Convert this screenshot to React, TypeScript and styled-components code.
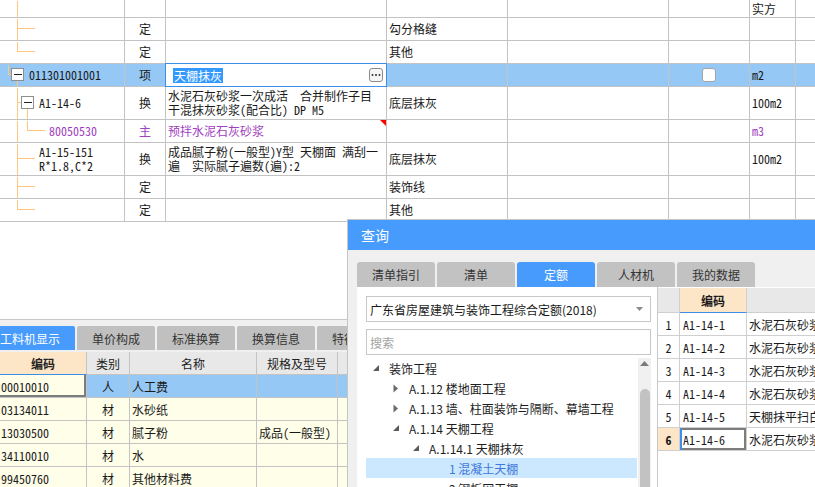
import React from 'react';
import styled, { createGlobalStyle } from 'styled-components';

const LINE = '#c3c3c3';
const SEL = '#96c8f5';
const BLUE = '#469bfd';
const PURPLE = '#a040c0';
const ORANGE = '#ffc77a';
const MONO = `"Noto Sans Mono CJK SC", "Noto Sans CJK SC", "Liberation Mono", monospace`;
const UI = `"Noto Sans CJK SC", "Noto Sans", sans-serif`;

const GlobalStyle = createGlobalStyle`
  html, body { margin: 0; padding: 0; background: #fff; }
  body { font-family: ${UI}; font-size: 12px; color: #1a1a1a; }
  * { box-sizing: border-box; }
`;

const Screen = styled.div`
  position: relative;
  width: 815px;
  height: 487px;
  overflow: hidden;
  background: #fff;
  display: flex;
  flex-direction: column;
  font-family: ${MONO};
`;

/* ---------- top grid ---------- */
const TopGrid = styled.div`
  display: flex;
  flex-direction: column;
  flex: none;
`;

const TopRow = styled.div<{ $h: number; $sel?: boolean }>`
  display: grid;
  grid-template-columns: 125px 41px 221px 121px 161px 81px 46px 20px;
  height: ${(p) => p.$h}px;
  background: ${(p) => (p.$sel ? SEL : '#fff')};
`;

const Cell = styled.div<{ $center?: boolean; $color?: string; $pl?: number }>`
  position: relative;
  border-right: 1px solid ${LINE};
  border-bottom: 1px solid ${LINE};
  display: flex;
  align-items: center;
  justify-content: ${(p) => (p.$center ? 'center' : 'flex-start')};
  padding-left: ${(p) => p.$pl ?? 0}px;
  color: ${(p) => p.$color ?? '#1a1a1a'};
  font-size: 12px;
  line-height: 14px;
  white-space: nowrap;
  overflow: hidden;
`;

const FlagCell = styled(Cell)`
  &::before {
    content: '';
    position: absolute;
    top: 0;
    right: 0;
    border-top: 6px solid #ff0000;
    border-left: 6px solid transparent;
  }
`;

const EditCell = styled(Cell)`
  background: #fff;
  padding: 0 3px 0 7px;
  justify-content: space-between;
  overflow: visible;
  &::after {
    content: '';
    position: absolute;
    left: -1px;
    top: -1px;
    right: -1px;
    bottom: -1px;
    border: 1px solid #3d8ee8;
    pointer-events: none;
  }
`;

const Highlight = styled.span`
  background: #3399ff;
  color: #fff;
  line-height: 15px;
  padding: 0 1px;
  font-family: ${UI};
`;

const DotsButton = styled.span`
  width: 14px;
  height: 14px;
  border: 1px solid #8c8c8c;
  border-radius: 3px;
  background: #f6f6f6;
  display: flex;
  align-items: center;
  justify-content: center;
`;

const CheckBox = styled.span`
  width: 14px;
  height: 14px;
  border: 1px solid #a5a5a5;
  border-radius: 3px;
  background: #fff;
`;

const Lines = styled.div`
  display: flex;
  flex-direction: column;
`;

const Guides = styled.svg`
  position: absolute;
  left: 0;
  top: 0;
  overflow: visible;
  pointer-events: none;
`;

type Seg = [number, number, number, number];

function TreeGuide({ h, segs, boxes = [] }: { h: number; segs: Seg[]; boxes?: [number, number][] }) {
  return (
    <Guides width={125} height={h} shapeRendering="crispEdges">
      {segs.map(([x1, y1, x2, y2], i) => (
        <line key={i} x1={x1 + 0.5} y1={y1 + 0.5} x2={x2 + 0.5} y2={y2 + 0.5} stroke={ORANGE} strokeWidth={1} />
      ))}
      {boxes.map(([cx, cy], i) => (
        <g key={'b' + i}>
          <rect x={cx - 6 + 0.5} y={cy - 6 + 0.5} width={12} height={12} fill="#fff" stroke="#8e8e8e" />
          <line x1={cx - 3} y1={cy + 0.5} x2={cx + 5} y2={cy + 0.5} stroke="#222" />
        </g>
      ))}
    </Guides>
  );
}

type TopData = {
  h: number;
  segs: Seg[];
  boxes?: [number, number][];
  code?: string[];
  indent?: number;
  purple?: boolean;
  type?: string;
  name?: string[];
  edit?: string;
  flag?: boolean;
  desc?: string;
  check?: boolean;
  unit?: string;
  sel?: boolean;
};

const topRows: TopData[] = [
  { h: 18, segs: [[17, 0, 17, 18]], unit: '实方' },
  { h: 23, segs: [[17, 0, 17, 23], [17, 10, 34, 10]], type: '定', desc: '勾分格缝' },
  { h: 23, segs: [[17, 0, 17, 10], [17, 10, 34, 10]], type: '定', desc: '其他' },
  {
    h: 23,
    segs: [[8, 0, 8, 10], [8, 10, 10, 10], [17, 16, 17, 23]],
    boxes: [[17, 10]],
    code: ['011301001001'],
    indent: 29,
    type: '项',
    sel: true,
    edit: '天棚抹灰',
    check: true,
    unit: 'm2',
  },
  {
    h: 33,
    segs: [[17, 0, 17, 33], [17, 15, 20, 15], [27, 21, 27, 33]],
    boxes: [[27, 15]],
    code: ['A1-14-6'],
    indent: 39,
    type: '换',
    name: ['水泥石灰砂浆一次成活\u3000合并制作子目', '干混抹灰砂浆(配合比) DP M5'],
    desc: '底层抹灰',
    unit: '100m2',
  },
  {
    h: 23,
    segs: [[17, 0, 17, 23], [27, 0, 27, 10], [27, 10, 44, 10]],
    code: ['80050530'],
    indent: 49,
    purple: true,
    type: '主',
    name: ['预拌水泥石灰砂浆'],
    flag: true,
    unit: 'm3',
  },
  {
    h: 33,
    segs: [[17, 0, 17, 33], [17, 15, 34, 15]],
    code: ['A1-15-151', 'R*1.8,C*2'],
    indent: 39,
    type: '换',
    name: ['成品腻子粉(一般型)Y型 天棚面 满刮一', '遍\u3000实际腻子遍数(遍):2'],
    desc: '底层抹灰',
    unit: '100m2',
  },
  { h: 23, segs: [[17, 0, 17, 23], [17, 10, 34, 10]], type: '定', desc: '装饰线' },
  { h: 23, segs: [[17, 0, 17, 10], [17, 10, 34, 10]], type: '定', desc: '其他' },
];

function TopRowView({ r }: { r: TopData }) {
  const color = r.purple ? PURPLE : undefined;
  const NameCell = r.flag ? FlagCell : Cell;
  return (
    <TopRow $h={r.h} $sel={r.sel}>
      <Cell $pl={r.indent ?? 0} $color={color}>
        <TreeGuide h={r.h} segs={r.segs} boxes={r.boxes} />
        {r.code && (
          <Lines>
            {r.code.map((c) => (
              <span key={c}>{c}</span>
            ))}
          </Lines>
        )}
      </Cell>
      <Cell $center $color={color}>{r.type}</Cell>
      {r.edit ? (
        <EditCell>
          <Highlight>{r.edit}</Highlight>
          <DotsButton>
            <svg width="10" height="4" viewBox="0 0 10 4">
              <circle cx="1.5" cy="2" r="1" fill="#333" />
              <circle cx="5" cy="2" r="1" fill="#333" />
              <circle cx="8.5" cy="2" r="1" fill="#333" />
            </svg>
          </DotsButton>
        </EditCell>
      ) : (
        <NameCell $pl={2} $color={color}>
          {r.name && (
            <Lines>
              {r.name.map((n) => (
                <span key={n}>{n}</span>
              ))}
            </Lines>
          )}
        </NameCell>
      )}
      <Cell $pl={2}>{r.desc}</Cell>
      <Cell />
      <Cell $center>{r.check && <CheckBox />}</Cell>
      <Cell $pl={2} $color={color}>{r.unit}</Cell>
      <Cell />
    </TopRow>
  );
}

/* ---------- middle / bottom ---------- */
const Blank = styled.div`
  height: 98px;
  flex: none;
  border-bottom: 1px solid #c8c8c8;
  background: #fff;
`;

const TabStrip = styled.div`
  height: 32px;
  flex: none;
  display: flex;
  align-items: flex-start;
  gap: 2px;
  padding-top: 6px;
  background: #f0f0f0;
  font-family: ${UI};
`;

const BottomTab = styled.div<{ $active?: boolean; $first?: boolean }>`
  height: 24px;
  min-width: 78px;
  padding: 0 15px;
  margin-left: ${(p) => (p.$first ? '-15px' : '0')};
  border-radius: 2px 2px 0 0;
  background: ${(p) => (p.$active ? BLUE : '#c0c0c0')};
  color: ${(p) => (p.$active ? '#fff' : '#333')};
  font-size: 12px;
  display: flex;
  align-items: center;
  justify-content: center;
  white-space: nowrap;
  flex: none;
`;

const BGrid = styled.div`
  display: flex;
  flex-direction: column;
  flex: 1;
  background: #fff;
`;

const BRow = styled.div<{ $bg: string }>`
  display: grid;
  grid-template-columns: 87px 43px 127px 81px 40px;
  height: 23px;
  flex: none;
  background: ${(p) => p.$bg};
`;

const BCell = styled.div<{ $center?: boolean; $bg?: string; $head?: boolean; $bold?: boolean; $focus?: boolean; $pl?: number }>`
  border-right: 1px solid ${LINE};
  border-bottom: 1px solid ${(p) => (p.$head && p.$bold ? '#3d8ee8' : LINE)};
  background: ${(p) => p.$bg ?? 'transparent'};
  display: flex;
  align-items: center;
  justify-content: ${(p) => (p.$center ? 'center' : 'flex-start')};
  padding-left: ${(p) => p.$pl ?? 0}px;
  font-size: 12px;
  font-weight: ${(p) => (p.$bold ? 700 : 400)};
  color: ${(p) => (p.$head ? '#222' : '#1a1a1a')};
  white-space: nowrap;
  overflow: hidden;
  box-shadow: ${(p) => (p.$focus ? 'inset -2px -2px 0 #7d7d7d' : 'none')};
`;

const bRows = [
  { code: '00010010', kind: '人', name: '人工费', spec: '', sel: true },
  { code: '03134011', kind: '材', name: '水砂纸', spec: '' },
  { code: '13030500', kind: '材', name: '腻子粉', spec: '成品(一般型)' },
  { code: '34110010', kind: '材', name: '水', spec: '' },
  { code: '99450760', kind: '材', name: '其他材料费', spec: '' },
];

/* ---------- dialog ---------- */
const Dialog = styled.div`
  position: absolute;
  left: 347px;
  top: 219px;
  width: 490px;
  height: 290px;
  border: 1px solid #c4c4c4;
  background: #f0f0f0;
  display: flex;
  flex-direction: column;
  font-family: ${UI};
`;

const DialogTitle = styled.div`
  height: 30px;
  flex: none;
  background: ${BLUE};
  color: #fff;
  font-size: 14px;
  line-height: 30px;
  padding-left: 13px;
`;

const DialogBody = styled.div`
  flex: 1;
  display: flex;
  flex-direction: column;
  padding: 12px 0 0 9px;
  min-height: 0;
`;

const DlgTabs = styled.div`
  display: flex;
  gap: 2px;
  flex: none;
`;

const DlgTab = styled.div<{ $active?: boolean }>`
  width: 78px;
  height: 25px;
  border-radius: 3px 3px 0 0;
  background: ${(p) => (p.$active ? BLUE : '#c2c2c2')};
  color: ${(p) => (p.$active ? '#fff' : '#333')};
  font-size: 12px;
  display: flex;
  align-items: center;
  justify-content: center;
`;

const DlgContent = styled.div`
  flex: 1;
  display: flex;
  min-height: 0;
`;

const LeftPane = styled.div`
  width: 300px;
  flex: none;
  background: #fff;
  padding: 9px 6px 0 9px;
  display: flex;
  flex-direction: column;
`;

const Select = styled.div`
  height: 26px;
  flex: none;
  border: 1px solid #c8c8c8;
  display: flex;
  align-items: center;
  justify-content: space-between;
  padding: 0 7px 0 3px;
  font-size: 12px;
  color: #1a1a1a;
`;

const Search = styled.div`
  height: 26px;
  flex: none;
  margin-top: 7px;
  border: 1px solid #c8c8c8;
  display: flex;
  align-items: center;
  padding-left: 3px;
  font-size: 12px;
  color: #a3a3a3;
`;

const TreeWrap = styled.div`
  margin-top: 3px;
  flex: 1;
  display: flex;
  gap: 1px;
  min-height: 0;
`;

const TreeList = styled.div`
  flex: 1;
  display: flex;
  flex-direction: column;
`;

const TreeRow = styled.div<{ $level: number; $sel?: boolean }>`
  height: 20px;
  flex: none;
  display: flex;
  align-items: center;
  padding-left: ${(p) => 7 + p.$level * 20}px;
  background: ${(p) => (p.$sel ? '#cce8ff' : 'transparent')};
  color: ${(p) => (p.$sel ? '#3f78d8' : '#1e1e1e')};
  font-size: 12px;
  white-space: nowrap;
`;

const Twisty = styled.span`
  width: 16px;
  flex: none;
  display: flex;
  align-items: center;
`;

const Scrollbar = styled.div`
  width: 13px;
  flex: none;
  background: #f0f0f0;
  display: flex;
  flex-direction: column;
  align-items: center;
  padding-top: 3px;
`;

const Thumb = styled.div`
  margin-top: 23px;
  width: 10px;
  flex: 1;
  background: #c2c2c2;
  border-radius: 5px;
`;

const RGrid = styled.div`
  flex: 1;
  border-left: 1px solid #c8c8c8;
  background: #fff;
  padding-top: 1px;
  display: flex;
  flex-direction: column;
  font-family: ${MONO};
`;

const RRow = styled.div<{ $h: number }>`
  display: grid;
  grid-template-columns: 22px 67px 200px;
  height: ${(p) => p.$h}px;
  flex: none;
`;

const RCell = styled.div<{ $bg?: string; $bold?: boolean; $center?: boolean; $ui?: boolean; $focus?: boolean; $blueLine?: boolean; $pl?: number }>`
  border-right: 1px solid #cfcfcf;
  border-bottom: 1px solid ${(p) => (p.$blueLine ? '#3d8ee8' : '#cfcfcf')};
  background: ${(p) => p.$bg ?? '#fff'};
  display: flex;
  align-items: center;
  justify-content: ${(p) => (p.$center ? 'center' : 'flex-start')};
  padding-left: ${(p) => p.$pl ?? 0}px;
  font-size: 12px;
  font-weight: ${(p) => (p.$bold ? 700 : 400)};
  font-family: ${(p) => (p.$ui ? UI : 'inherit')};
  color: #1a1a1a;
  white-space: nowrap;
  overflow: hidden;
  box-shadow: ${(p) =>
    p.$focus ? `inset 2px 0 0 #3d8ee8, inset -2px 0 0 #7d7d7d, inset 0 2px 0 #7d7d7d, inset 0 -2px 0 #7d7d7d` : 'none'};
`;

const tree = [
  { level: 0, twisty: 'open', text: '装饰工程' },
  { level: 1, twisty: 'closed', text: 'A.1.12 楼地面工程' },
  { level: 1, twisty: 'closed', text: 'A.1.13 墙、柱面装饰与隔断、幕墙工程' },
  { level: 1, twisty: 'open', text: 'A.1.14 天棚工程' },
  { level: 2, twisty: 'open', text: 'A.1.14.1 天棚抹灰' },
  { level: 3, twisty: '', text: '1 混凝土天棚', sel: true },
  { level: 3, twisty: '', text: '2 钢板网天棚' },
];

const rRows = [
  { n: '1', code: 'A1-14-1', name: '水泥石灰砂浆 混凝土' },
  { n: '2', code: 'A1-14-2', name: '水泥石灰砂浆 钢板网' },
  { n: '3', code: 'A1-14-3', name: '水泥石灰砂浆 板条' },
  { n: '4', code: 'A1-14-4', name: '水泥石灰砂浆 装饰线' },
  { n: '5', code: 'A1-14-5', name: '天棚抹平扫白灰' },
  { n: '6', code: 'A1-14-6', name: '水泥石灰砂浆一次成活', sel: true },
];

function TwistyIcon({ kind }: { kind: string }) {
  if (kind === 'open')
    return (
      <svg width="7" height="7" viewBox="0 0 7 7">
        <polygon points="6,0 6,6 0,6" fill="#5a5a5a" />
      </svg>
    );
  if (kind === 'closed')
    return (
      <svg width="6" height="9" viewBox="0 0 6 9">
        <polygon points="0.5,0.5 5,4.5 0.5,8.5" fill="#6a6a6a" />
      </svg>
    );
  return null;
}

export default function App() {
  return (
    <>
      <GlobalStyle />
      <Screen>
        <TopGrid>
          {topRows.map((r, i) => (
            <TopRowView key={i} r={r} />
          ))}
        </TopGrid>
        <Blank />
        <TabStrip>
          <BottomTab $active $first>工料机显示</BottomTab>
          <BottomTab>单价构成</BottomTab>
          <BottomTab>标准换算</BottomTab>
          <BottomTab>换算信息</BottomTab>
          <BottomTab>特征及内容</BottomTab>
        </TabStrip>
        <BGrid>
          <BRow $bg="#e8e8e8">
            <BCell $head $bold $center $bg="#fde5c8">编码</BCell>
            <BCell $head $center>类别</BCell>
            <BCell $head $center>名称</BCell>
            <BCell $head $center>规格及型号</BCell>
            <BCell $head />
          </BRow>
          {bRows.map((r) => (
            <BRow key={r.code} $bg={r.sel ? SEL : '#fffee9'}>
              <BCell $pl={1} $bg={r.sel ? '#fffee9' : undefined} $focus={r.sel}>
                {r.code}
              </BCell>
              <BCell $center>{r.kind}</BCell>
              <BCell $pl={2}>{r.name}</BCell>
              <BCell $pl={2}>{r.spec}</BCell>
              <BCell />
            </BRow>
          ))}
        </BGrid>

        <Dialog>
          <DialogTitle>查询</DialogTitle>
          <DialogBody>
            <DlgTabs>
              <DlgTab>清单指引</DlgTab>
              <DlgTab>清单</DlgTab>
              <DlgTab $active>定额</DlgTab>
              <DlgTab>人材机</DlgTab>
              <DlgTab>我的数据</DlgTab>
            </DlgTabs>
            <DlgContent>
              <LeftPane>
                <Select>
                  <span>广东省房屋建筑与装饰工程综合定额(2018)</span>
                  <svg width="7" height="4" viewBox="0 0 7 4">
                    <polygon points="0,0 7,0 3.5,4" fill="#8a8a8a" />
                  </svg>
                </Select>
                <Search>搜索</Search>
                <TreeWrap>
                  <TreeList>
                    {tree.map((t) => (
                      <TreeRow key={t.text} $level={t.level} $sel={t.sel}>
                        <Twisty>
                          <TwistyIcon kind={t.twisty} />
                        </Twisty>
                        {t.text}
                      </TreeRow>
                    ))}
                  </TreeList>
                  <Scrollbar>
                    <svg width="9" height="5" viewBox="0 0 9 5">
                      <polygon points="4.5,0 9,5 0,5" fill="#7a7a7a" />
                    </svg>
                    <Thumb />
                  </Scrollbar>
                </TreeWrap>
              </LeftPane>
              <RGrid>
                <RRow $h={25}>
                  <RCell $bg="#e8e8e8" />
                  <RCell $bg="#fde5c8" $bold $center $ui $blueLine>
                    编码
                  </RCell>
                  <RCell $bg="#e8e8e8" />
                </RRow>
                {rRows.map((r) => (
                  <RRow key={r.n} $h={23}>
                    <RCell $center $bg={r.sel ? '#fde5c8' : '#fff'} $bold={r.sel}>
                      {r.n}
                    </RCell>
                    <RCell $pl={3} $focus={r.sel}>
                      {r.code}
                    </RCell>
                    <RCell $pl={2} $ui>
                      {r.name}
                    </RCell>
                  </RRow>
                ))}
              </RGrid>
            </DlgContent>
          </DialogBody>
        </Dialog>
      </Screen>
    </>
  );
}
